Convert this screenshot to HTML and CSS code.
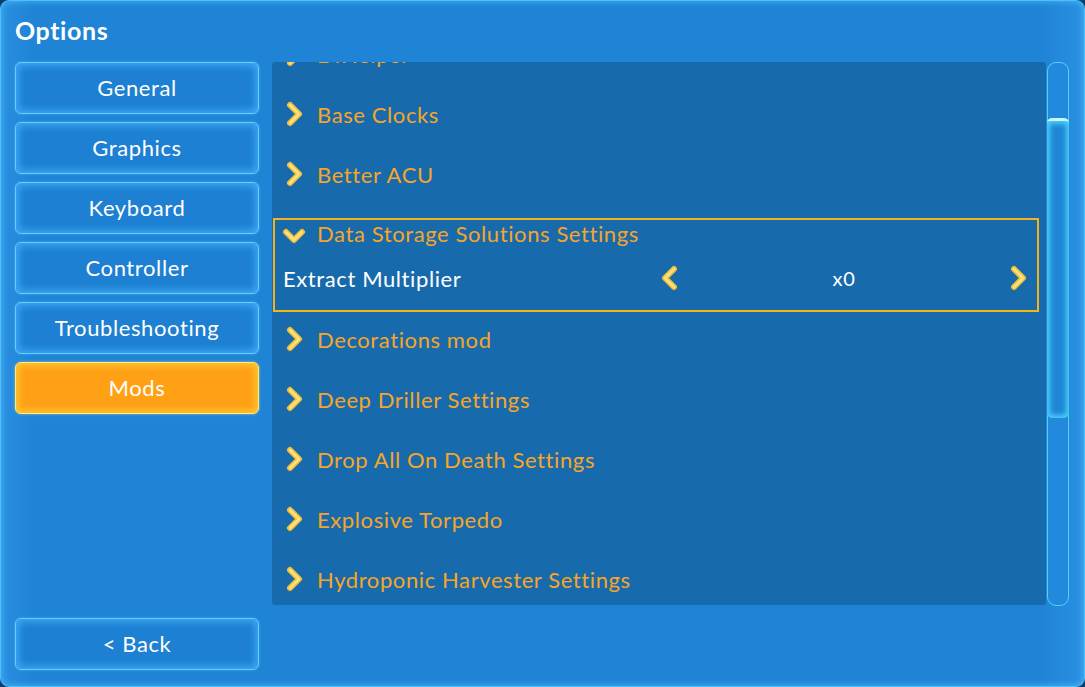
FILE: index.html
```html
<!DOCTYPE html>
<html lang="en">
<head>
    <meta charset="UTF-8">
    <title>Options</title>
    <link rel="stylesheet" href="styles.css">
</head>
<body>
    <div class="window">
        <h1 class="title">Options</h1>
        <div class="main">
            <div class="sidebar">
                <button class="tab">General</button>
                <button class="tab">Graphics</button>
                <button class="tab">Keyboard</button>
                <button class="tab">Controller</button>
                <button class="tab">Troubleshooting</button>
                <button class="tab active">Mods</button>
                <button class="tab back">&lt; Back</button>
            </div>
            <div class="content">
                <div class="panel">
                    <div class="list">
                        <div class="row">
                            <svg class="chev" viewBox="0 0 18 26"><polyline points="4,4 13,13 4,22"/><polyline class="hi" points="4,4 13,13 4,22"/></svg>
                            <span>DIHelper</span>
                        </div>
                        <div class="row">
                            <svg class="chev" viewBox="0 0 18 26"><polyline points="4,4 13,13 4,22"/><polyline class="hi" points="4,4 13,13 4,22"/></svg>
                            <span>Base Clocks</span>
                        </div>
                        <div class="row">
                            <svg class="chev" viewBox="0 0 18 26"><polyline points="4,4 13,13 4,22"/><polyline class="hi" points="4,4 13,13 4,22"/></svg>
                            <span>Better ACU</span>
                        </div>
                        <div class="group">
                            <div class="group-head">
                                <svg class="chev-down" viewBox="0 0 24 18"><polyline points="4,5 12,13 20,5"/><polyline class="hi" points="4,5 12,13 20,5"/></svg>
                                <span>Data Storage Solutions Settings</span>
                            </div>
                            <div class="option">
                                <span class="option-name">Extract Multiplier</span>
                                <div class="stepper">
                                    <svg class="chev" viewBox="0 0 18 26"><polyline points="14,4 5,13 14,22"/><polyline class="hi" points="14,4 5,13 14,22"/></svg>
                                    <span class="value">x0</span>
                                    <svg class="chev" viewBox="0 0 18 26"><polyline points="4,4 13,13 4,22"/><polyline class="hi" points="4,4 13,13 4,22"/></svg>
                                </div>
                            </div>
                        </div>
                        <div class="row">
                            <svg class="chev" viewBox="0 0 18 26"><polyline points="4,4 13,13 4,22"/><polyline class="hi" points="4,4 13,13 4,22"/></svg>
                            <span>Decorations mod</span>
                        </div>
                        <div class="row">
                            <svg class="chev" viewBox="0 0 18 26"><polyline points="4,4 13,13 4,22"/><polyline class="hi" points="4,4 13,13 4,22"/></svg>
                            <span>Deep Driller Settings</span>
                        </div>
                        <div class="row">
                            <svg class="chev" viewBox="0 0 18 26"><polyline points="4,4 13,13 4,22"/><polyline class="hi" points="4,4 13,13 4,22"/></svg>
                            <span>Drop All On Death Settings</span>
                        </div>
                        <div class="row">
                            <svg class="chev" viewBox="0 0 18 26"><polyline points="4,4 13,13 4,22"/><polyline class="hi" points="4,4 13,13 4,22"/></svg>
                            <span>Explosive Torpedo</span>
                        </div>
                        <div class="row">
                            <svg class="chev" viewBox="0 0 18 26"><polyline points="4,4 13,13 4,22"/><polyline class="hi" points="4,4 13,13 4,22"/></svg>
                            <span>Hydroponic Harvester Settings</span>
                        </div>
                        <div class="row">
                            <svg class="chev" viewBox="0 0 18 26"><polyline points="4,4 13,13 4,22"/><polyline class="hi" points="4,4 13,13 4,22"/></svg>
                            <span>Lights Out</span>
                        </div>
                    </div>
                </div>
                <div class="scroll">
                    <div class="thumb"></div>
                </div>
            </div>
        </div>
    </div>
</body>
</html>
```

FILE: styles.css
```css
* {
    margin: 0;
    padding: 0;
    box-sizing: border-box;
}

body {
    width: 1085px;
    height: 687px;
    overflow: hidden;
    background: #0d3d6b;
    font-family: Lato, "Noto Sans", sans-serif;
}

.window {
    width: 1085px;
    height: 687px;
    display: flex;
    flex-direction: column;
    padding: 0 15px 16px 14px;
    background: linear-gradient(90deg, #2a8fe0 0%, #1f84d5 3%, #1f84d5 96%, #2a90e2 100%);
    border: 1px solid #4cc0ff;
    border-radius: 9px;
    box-shadow: inset 0 0 6px 1px rgba(90, 200, 255, 0.6);
}

.title {
    height: 61px;
    padding-top: 14px;
    color: #fff;
    font-size: 25px;
    font-weight: 700;
    letter-spacing: 0.6px;
    line-height: 30px;
}

.main {
    flex: 1;
    display: flex;
}

/* left tabs */
.sidebar {
    width: 245px;
    display: flex;
    flex-direction: column;
    gap: 8px;
}

.tab {
    height: 52px;
    border: 1px solid #64d0ff;
    border-radius: 6px;
    background: #1d80d2;
    box-shadow: inset 0 0 7px 3px rgba(70, 180, 255, 0.75), 0 0 3px rgba(90, 200, 255, 0.5);
    color: #fff;
    font-family: Lato, "Noto Sans", sans-serif;
    font-size: 22px;
    letter-spacing: 0.6px;
    line-height: 48px;
    text-align: center;
}

.tab.active {
    border-color: #ffec8a;
    background: #ffa015;
    box-shadow: inset 0 0 7px 3px rgba(255, 200, 50, 0.9), 0 0 3px rgba(255, 220, 110, 0.6);
}

.tab.back {
    margin-top: auto;
}

/* content */
.content {
    margin-left: 13px;
    display: flex;
    align-items: flex-start;
}

.panel {
    width: 774px;
    height: 543px;
    overflow: hidden;
    background: #176aab;
    border-radius: 3px;
}

.list {
    margin-top: -38px;
}

.row {
    height: 60px;
    display: flex;
    align-items: center;
    padding-left: 14px;
    color: #f7a528;
    font-size: 22px;
    letter-spacing: 0.6px;
}

.chev {
    width: 18px;
    height: 26px;
    margin-right: 13px;
    flex-shrink: 0;
}

.chev polyline,
.chev-down polyline {
    fill: none;
    stroke: #f2bf3c;
    stroke-width: 6;
    stroke-linecap: round;
    stroke-linejoin: round;
}

.chev polyline.hi,
.chev-down polyline.hi {
    stroke: #ffe27e;
    stroke-width: 2.5;
}

.group {
    margin: 14px 7px -3px 1px;
    height: 94px;
    border: 2px solid #f2b61a;
}

.group-head {
    height: 27px;
    display: flex;
    align-items: center;
    padding-left: 7px;
    color: #f7a528;
    font-size: 22px;
    letter-spacing: 0.6px;
}

.chev-down {
    width: 24px;
    height: 18px;
    margin-right: 11px;
    margin-top: 4px;
}

.option {
    height: 62px;
    display: flex;
    align-items: center;
    padding-left: 8px;
    color: #fff;
    font-size: 22px;
    letter-spacing: 0.6px;
}

.option-name {
    width: 377px;
}

.stepper {
    flex: 1;
    display: flex;
    align-items: center;
    justify-content: space-between;
    padding-right: 9px;
}

.stepper .chev {
    margin-right: 0;
}

.value {
    font-size: 20px;
}

/* scrollbar */
.scroll {
    width: 22px;
    height: 544px;
    margin-left: 1px;
    border: 1px solid #4fd2ff;
    border-radius: 9px;
    background: #2289dc;
    padding-top: 55px;
}

.thumb {
    height: 300px;
    margin: 0 -1px;
    border-top: 3px solid #c8f6ff;
    border-radius: 5px;
    background: #1f86d6;
    box-shadow: inset 0 0 5px 3px rgba(80, 220, 255, 0.85);
}
```
